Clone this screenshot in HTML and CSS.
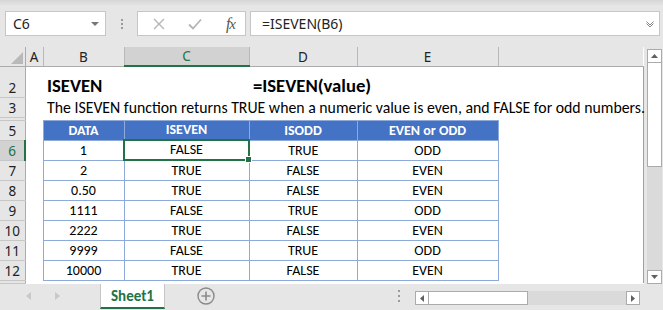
FILE: index.html
```html
<!DOCTYPE html>
<html lang="en">
<head>
  <meta charset="UTF-8">
  <title>ISEVEN - Sheet1</title>
  <link rel="stylesheet" href="styles.css">
</head>
<body>
  <div class="excel">

    <div class="formula-bar">
      <div class="name-box">
        <span>C6</span>
        <svg class="caret" width="8" height="4" viewBox="0 0 8 4"><path d="M0 0h8L4 4z" fill="#777"/></svg>
      </div>
      <div class="grip"><i></i><i></i><i></i></div>
      <div class="fx-buttons">
        <svg width="12" height="12" viewBox="0 0 12 12"><path d="M1 1l10 10M11 1L1 11" stroke="#b4b4b4" stroke-width="1.3"/></svg>
        <svg width="14" height="12" viewBox="0 0 14 12"><path d="M1 6.5l4 4L13 1.5" stroke="#b4b4b4" stroke-width="1.8" fill="none"/></svg>
        <span class="fx"><i>f</i>x</span>
      </div>
      <div class="formula-input">
        <span>=ISEVEN(B6)</span>
        <svg class="chevron" width="8" height="6" viewBox="0 0 8 6"><path d="M0.5 0.5L4 4L7.5 0.5M0.5 2.5L4 6L7.5 2.5" stroke="#888" stroke-width="1" fill="none"/></svg>
      </div>
    </div>

    <div class="sheet-area">
      <table class="grid">
        <colgroup>
          <col class="c-head"><col class="c-a"><col class="c-b"><col class="c-c"><col class="c-d"><col class="c-e"><col class="c-f">
        </colgroup>
        <thead>
          <tr class="col-heads">
            <th class="corner"><span class="corner-mark"></span></th>
            <th>A</th><th>B</th><th class="active">C</th><th>D</th><th>E</th><th class="blank"></th>
          </tr>
        </thead>
        <tbody>
          <tr class="r-title">
            <th class="row-head">2</th><td></td>
            <td class="title">ISEVEN</td><td></td>
            <td class="title">=ISEVEN(value)</td><td></td><td class="edge"></td>
          </tr>
          <tr class="r-std">
            <th class="row-head">3</th><td></td>
            <td class="note" colspan="4">The ISEVEN function returns TRUE when a numeric value is even, and FALSE for odd numbers.</td>
            <td class="edge"></td>
          </tr>
          <tr class="r-hidden">
            <th class="row-head"></th><td></td><td></td><td></td><td></td><td></td><td class="edge"></td>
          </tr>
          <tr class="r-std">
            <th class="row-head">5</th><td></td>
            <td class="hd">DATA</td><td class="hd">ISEVEN</td><td class="hd">ISODD</td><td class="hd">EVEN or ODD</td>
            <td class="edge"></td>
          </tr>
          <tr class="r-std">
            <th class="row-head active">6</th><td></td>
            <td class="d">1</td><td class="d sel">FALSE</td><td class="d">TRUE</td><td class="d">ODD</td><td class="edge"></td>
          </tr>
          <tr class="r-std">
            <th class="row-head">7</th><td></td>
            <td class="d">2</td><td class="d">TRUE</td><td class="d">FALSE</td><td class="d">EVEN</td><td class="edge"></td>
          </tr>
          <tr class="r-std">
            <th class="row-head">8</th><td></td>
            <td class="d">0.50</td><td class="d">TRUE</td><td class="d">FALSE</td><td class="d">EVEN</td><td class="edge"></td>
          </tr>
          <tr class="r-std">
            <th class="row-head">9</th><td></td>
            <td class="d">1111</td><td class="d">FALSE</td><td class="d">TRUE</td><td class="d">ODD</td><td class="edge"></td>
          </tr>
          <tr class="r-std">
            <th class="row-head">10</th><td></td>
            <td class="d">2222</td><td class="d">TRUE</td><td class="d">FALSE</td><td class="d">EVEN</td><td class="edge"></td>
          </tr>
          <tr class="r-std">
            <th class="row-head">11</th><td></td>
            <td class="d">9999</td><td class="d">FALSE</td><td class="d">TRUE</td><td class="d">ODD</td><td class="edge"></td>
          </tr>
          <tr class="r-std">
            <th class="row-head">12</th><td></td>
            <td class="d">10000</td><td class="d">TRUE</td><td class="d">FALSE</td><td class="d">EVEN</td><td class="edge"></td>
          </tr>
          <tr class="r-cut">
            <th class="row-head"></th><td></td><td></td><td></td><td></td><td></td><td class="edge"></td>
          </tr>
        </tbody>
      </table>

      <div class="vscroll">
        <div class="sb-btn"><svg width="7" height="4" viewBox="0 0 7 4"><path d="M0 4h7L3.5 0z" fill="#606060"/></svg></div>
        <div class="sb-thumb"></div>
        <div class="sb-track"></div>
        <div class="sb-btn"><svg width="7" height="4" viewBox="0 0 7 4"><path d="M0 0h7L3.5 4z" fill="#606060"/></svg></div>
      </div>
    </div>

    <div class="tab-bar">
      <div class="tab-nav">
        <svg width="5" height="8" viewBox="0 0 5 8"><path d="M5 0v8L0 4z" fill="#c8c8c8"/></svg>
        <svg width="5" height="8" viewBox="0 0 5 8"><path d="M0 0v8L5 4z" fill="#c8c8c8"/></svg>
      </div>
      <div class="sheet-tab">Sheet1</div>
      <div class="add-sheet">
        <svg width="18" height="18" viewBox="0 0 18 18"><circle cx="9" cy="9" r="8" stroke="#8a8a8a" stroke-width="1.4" fill="none"/><path d="M9 4.5v9M4.5 9h9" stroke="#8a8a8a" stroke-width="1.6"/></svg>
      </div>
      <div class="grip tab-grip"><i></i><i></i><i></i></div>
      <div class="hscroll">
        <div class="sb-btn"><svg width="4" height="7" viewBox="0 0 4 7"><path d="M4 0v7L0 3.5z" fill="#606060"/></svg></div>
        <div class="sb-thumb"></div>
        <div class="sb-track"></div>
        <div class="sb-btn"><svg width="4" height="7" viewBox="0 0 4 7"><path d="M0 0v7L4 3.5z" fill="#606060"/></svg></div>
      </div>
    </div>

  </div>
</body>
</html>
```

FILE: styles.css
```css
/* Page */
body {
  margin: 0;
  background-color: #e6e6e6;
  font-family: "Carlito", "Lato", "Liberation Sans", sans-serif;
  color: #000;
}

.excel {
  width: 663px;
  height: 310px;
  display: flex;
  flex-direction: column;
  overflow: hidden;
  background-color: #e6e6e6;
}

/* Formula bar */
.formula-bar {
  height: 47px;
  flex: none;
  display: flex;
  align-items: flex-start;
  padding-top: 11px;
  box-sizing: border-box;
  background: linear-gradient(#d6d6d6, #e6e6e6 6px);
  font-family: "Noto Sans", "Open Sans", sans-serif;
  font-size: 14px;
  color: #222;
}

.name-box {
  margin-left: 5px;
  width: 101px;
  height: 25px;
  box-sizing: border-box;
  border: 1px solid #c6c6c6;
  background-color: #fff;
  display: flex;
  align-items: center;
  justify-content: space-between;
  padding: 0 6px 0 7px;
}

.grip {
  width: 31px;
  height: 25px;
  display: flex;
  flex-direction: column;
  align-items: center;
  justify-content: center;
  gap: 2px;
}

.grip i {
  width: 2px;
  height: 2px;
  background-color: #9a9a9a;
}

.fx-buttons {
  width: 109px;
  height: 25px;
  box-sizing: border-box;
  border: 1px solid #c6c6c6;
  background-color: #fff;
  display: flex;
  align-items: center;
  justify-content: space-between;
  padding: 0 10px 0 15px;
}

.fx {
  font-family: "Liberation Serif", serif;
  font-style: italic;
  font-size: 15px;
  color: #555;
  letter-spacing: -1px;
}

.fx i {
  font-size: 16px;
}

.formula-input {
  margin-left: 4px;
  width: 410px;
  height: 25px;
  box-sizing: border-box;
  border: 1px solid #c6c6c6;
  background-color: #fff;
  display: flex;
  align-items: center;
  justify-content: space-between;
  padding: 0 5px 0 11px;
}

/* Sheet grid */
.sheet-area {
  height: 236px;
  flex: none;
  display: flex;
  align-items: flex-start;
}

.grid {
  width: 643px;
  table-layout: fixed;
  border-collapse: collapse;
  background-color: #fff;
  font-size: 14px;
}

.c-head { width: 25px; }
.c-a { width: 18px; }
.c-b { width: 81px; }
.c-c { width: 125px; }
.c-d { width: 108px; }
.c-e { width: 141px; }
.c-f { width: 145px; }

.grid td,
.grid th {
  padding: 0;
  white-space: nowrap;
  overflow: visible;
}

.col-heads {
  height: 19px;
}

.col-heads th {
  background-color: #e6e6e6;
  border-right: 1px solid #b8b8b8;
  border-bottom: 1px solid #ababab;
  font-family: "Noto Sans", "Open Sans", sans-serif;
  font-weight: normal;
  font-size: 13.5px;
  color: #222;
  vertical-align: bottom;
  line-height: 17px;
}

.col-heads th.active {
  background-color: #d2d2d2;
  color: #217346;
  border-bottom: 2px solid #217346;
}

.col-heads th.blank {
  border-right: none;
}

.col-heads th.corner {
  border-right: 1px solid #ababab;
  position: relative;
}

.corner-mark {
  position: absolute;
  right: 2px;
  bottom: 2px;
  width: 0;
  height: 0;
  border-left: 12px solid transparent;
  border-bottom: 12px solid #b9b9b9;
}

.row-head {
  background-color: #e6e6e6;
  border-right: 1px solid #ababab;
  border-bottom: 1px solid #c6c6c6;
  font-family: "Noto Sans", "Open Sans", sans-serif;
  font-weight: normal;
  font-size: 13.5px;
  color: #222;
  text-align: center;
  vertical-align: bottom;
  line-height: 18px;
}

.row-head.active {
  background-color: #d2d2d2;
  color: #217346;
  border-right: 2px solid #217346;
}

.r-title { height: 31px; }
.r-std { height: 20px; }
.r-hidden { height: 3px; }
.r-cut { height: 3px; }

.r-hidden .row-head,
.r-cut .row-head {
  line-height: 0;
}

.edge {
  border-right: 1px solid #a0a0a0;
}

.title {
  font-weight: bold;
  font-size: 18.7px;
  padding-left: 4px !important;
  vertical-align: bottom;
  line-height: 23px;
}

.note {
  padding-left: 4px !important;
  vertical-align: bottom;
  line-height: 19px;
  font-size: 15.8px;
}

.hd {
  background-color: #4472c4;
  color: #fff;
  font-weight: bold;
  text-align: center;
  border: 1px solid #8eaadb;
  vertical-align: bottom;
  line-height: 18px;
}

.d {
  text-align: center;
  border: 1px solid #8eaadb;
  vertical-align: bottom;
  line-height: 18px;
}

.d.sel {
  border: 2px solid #217346;
  position: relative;
}

.d.sel::after {
  content: "";
  position: absolute;
  right: -4px;
  bottom: -4px;
  width: 5px;
  height: 5px;
  background-color: #217346;
  border: 1px solid #fff;
}

/* Scrollbars */
.vscroll {
  margin: 2px 0 0 3px;
  width: 15px;
  height: 235px;
  display: flex;
  flex-direction: column;
}

.sb-btn {
  flex: none;
  width: 15px;
  height: 14px;
  box-sizing: border-box;
  border: 1px solid #ababab;
  background-color: #fff;
  display: flex;
  align-items: center;
  justify-content: center;
}

.sb-thumb {
  flex: none;
  box-sizing: border-box;
  border: 1px solid #ababab;
  background-color: #fff;
}

.vscroll .sb-thumb {
  height: 104px;
  border-top: none;
}

.sb-track {
  flex: 1;
  background-color: #dadada;
}

/* Sheet tabs */
.tab-bar {
  flex: 1;
  display: flex;
  align-items: flex-start;
}

.tab-nav {
  width: 100px;
  height: 26px;
  display: flex;
  align-items: center;
  gap: 24px;
  padding-left: 26px;
  box-sizing: border-box;
}

.sheet-tab {
  width: 65px;
  height: 25px;
  margin-top: 1px;
  box-sizing: border-box;
  background-color: #fff;
  border-left: 1px solid #c6c6c6;
  border-right: 1px solid #c6c6c6;
  border-bottom: 2px solid #217346;
  color: #217346;
  font-weight: bold;
  font-size: 15px;
  text-align: center;
  line-height: 24px;
}

.add-sheet {
  width: 83px;
  height: 26px;
  display: flex;
  align-items: center;
  padding-left: 32px;
  box-sizing: border-box;
}

.tab-grip {
  width: 167px;
  height: 26px;
  padding: 7px 0 0 150px;
  box-sizing: border-box;
  align-items: flex-start;
  justify-content: flex-start;
  gap: 3px;
}

.hscroll {
  margin-top: 8px;
  width: 225px;
  height: 14px;
  display: flex;
}

.hscroll .sb-btn {
  width: 14px;
  height: 14px;
}

.hscroll .sb-thumb {
  width: 99px;
  border-left: none;
}
```
